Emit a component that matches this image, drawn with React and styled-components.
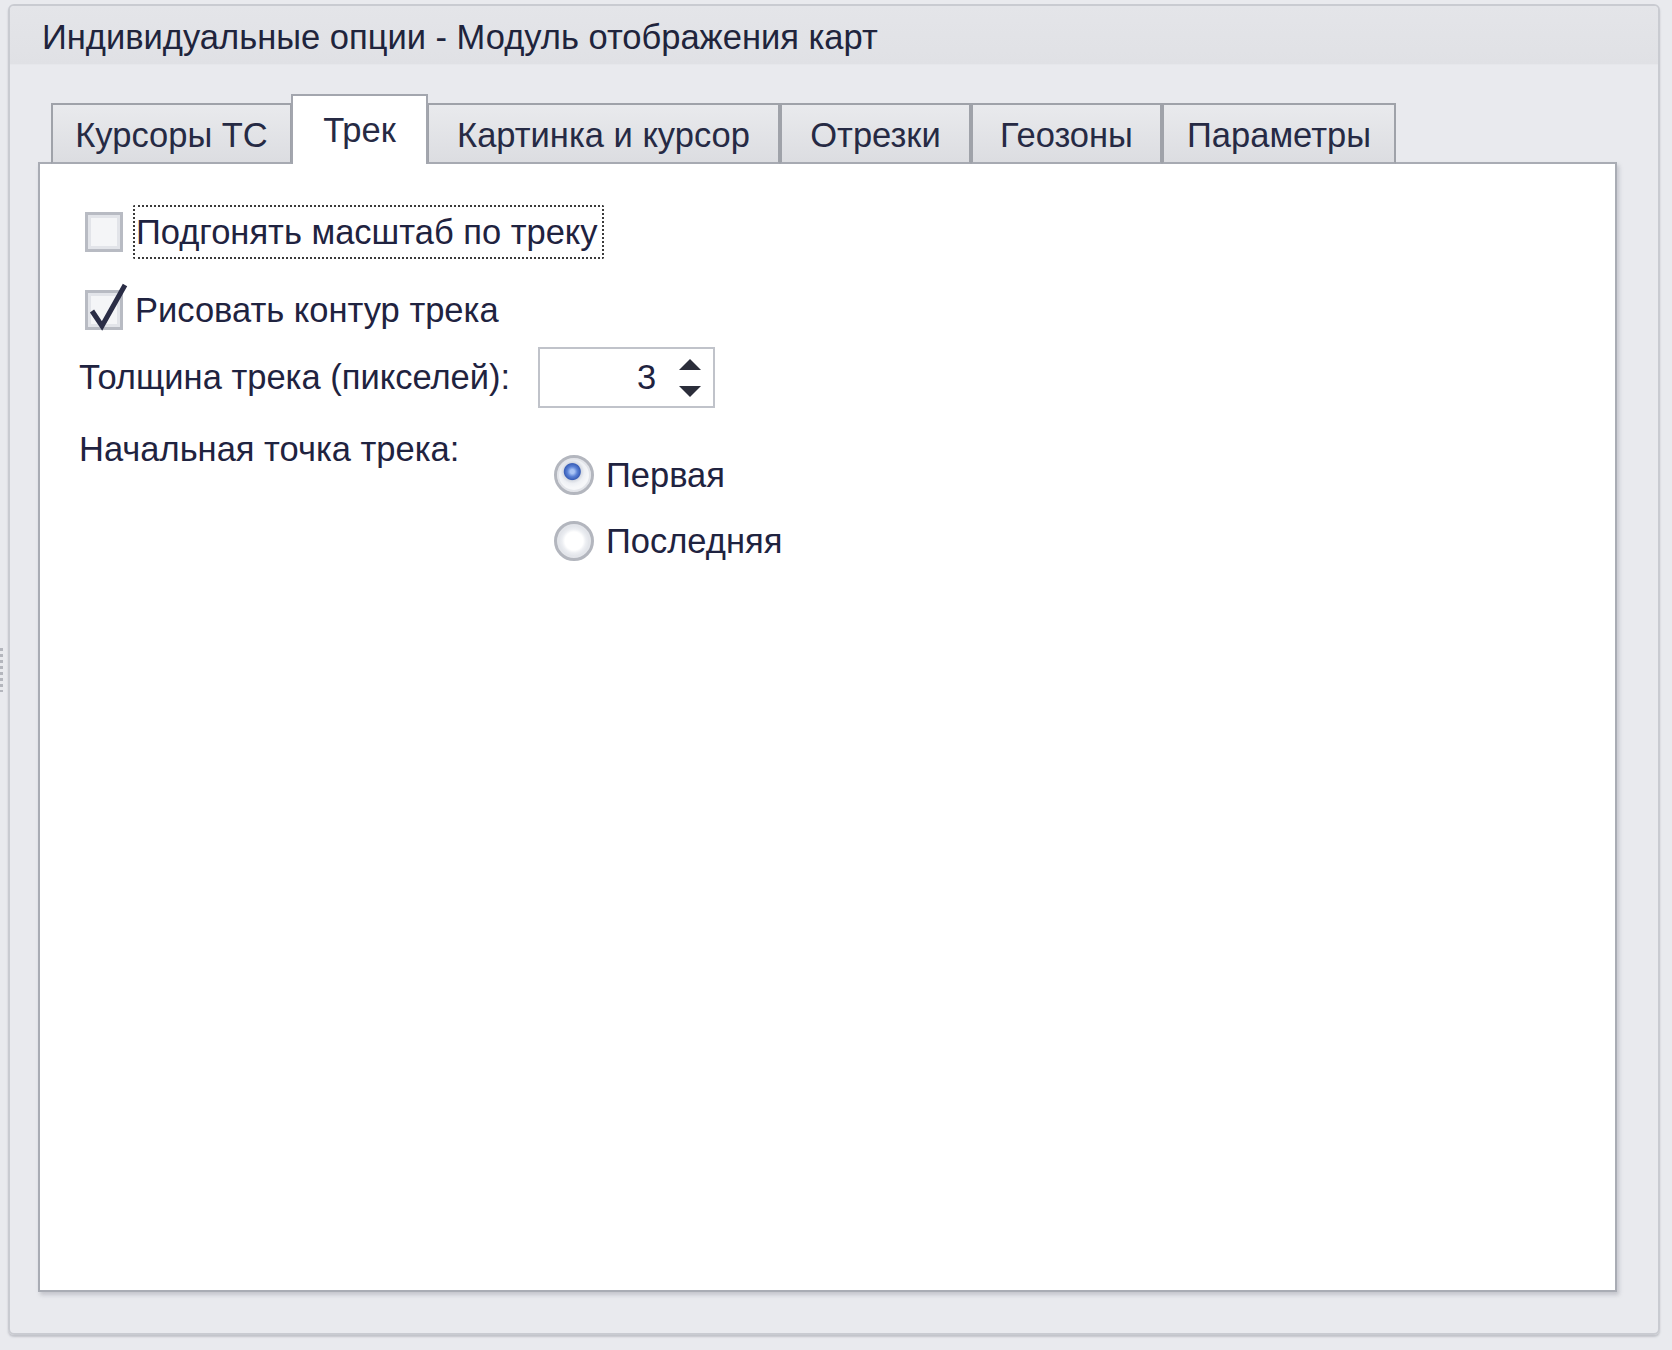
import { useState } from "react";
import styled, { createGlobalStyle } from 'styled-components'

const GlobalStyle = createGlobalStyle`
  html, body {
    margin: 0;
    padding: 0;
    background: #e9eaee;
  }
  body {
    font-family: "Liberation Sans", Arial, sans-serif;
    font-size: 34.5px;
    color: #1f2340;
  }
`

const tabs = [
  { id: 'cursors', label: 'Курсоры ТС', width: 241 },
  { id: 'track', label: 'Трек', width: 135 },
  { id: 'picture', label: 'Картинка и курсор', width: 353 },
  { id: 'segments', label: 'Отрезки', width: 191 },
  { id: 'geozones', label: 'Геозоны', width: 191 },
  { id: 'params', label: 'Параметры', width: 234 },
]

function App() {
  const [activeTab, setActiveTab] = useState('track')
  const [fitScale, setFitScale] = useState(false)
  const [drawOutline, setDrawOutline] = useState(true)
  const [thickness, setThickness] = useState(3)
  const [startPoint, setStartPoint] = useState('first')

  return (
    <Page>
      <GlobalStyle />
      <Gripper />
      <Window>
        <Header>Индивидуальные опции - Модуль отображения карт</Header>
        <Body>
          <TabStrip>
            {tabs.map(t => (
              <Tab
                key={t.id}
                $width={t.width}
                $active={activeTab === t.id}
                onClick={() => setActiveTab(t.id)}
              >
                {t.label}
              </Tab>
            ))}
          </TabStrip>
          <Panel>
            <CheckRow onClick={() => setFitScale(!fitScale)}>
              <CheckBox>{fitScale && <CheckMark />}</CheckBox>
              <FocusLabel>Подгонять масштаб по треку</FocusLabel>
            </CheckRow>
            <CheckRow $gap={24} onClick={() => setDrawOutline(!drawOutline)}>
              <CheckBox>{drawOutline && <CheckMark />}</CheckBox>
              <PlainLabel>Рисовать контур трека</PlainLabel>
            </CheckRow>
            <SpinRow>
              <FieldLabel>Толщина трека (пикселей):</FieldLabel>
              <Spin>
                <SpinValue>{thickness}</SpinValue>
                <SpinArrows>
                  <ArrowButton onClick={() => setThickness(thickness + 1)}>
                    <svg width="22" height="11" viewBox="0 0 22 11"><polygon points="11,0 22,11 0,11" fill="#2b2d3a" /></svg>
                  </ArrowButton>
                  <ArrowButton onClick={() => setThickness(Math.max(1, thickness - 1))}>
                    <svg width="22" height="11" viewBox="0 0 22 11"><polygon points="0,0 22,0 11,11" fill="#2b2d3a" /></svg>
                  </ArrowButton>
                </SpinArrows>
              </Spin>
            </SpinRow>
            <StartRow>
              <FieldLabel>Начальная точка трека:</FieldLabel>
              <RadioGroup>
                <RadioRow onClick={() => setStartPoint('first')}>
                  <Radio $checked={startPoint === 'first'} />
                  <span>Первая</span>
                </RadioRow>
                <RadioRow onClick={() => setStartPoint('last')}>
                  <Radio $checked={startPoint === 'last'} />
                  <span>Последняя</span>
                </RadioRow>
              </RadioGroup>
            </StartRow>
          </Panel>
        </Body>
      </Window>
    </Page>
  )
}

function CheckMark() {
  return (
    <CheckSvg width="42" height="48" viewBox="0 0 42 48">
      <path d="M5 28 L15 43 L38 2" fill="none" stroke="#2a2d46" strokeWidth="5" strokeLinejoin="miter" />
    </CheckSvg>
  )
}

const Page = styled.div`
  display: flex;
  height: 100vh;
  box-sizing: border-box;
  padding: 4px 12px 15px 0;
`

const Gripper = styled.div`
  align-self: flex-start;
  margin-top: 644px;
  width: 3px;
  height: 44px;
  margin-right: 5px;
  background: repeating-linear-gradient(to bottom, #b4b6bd 0 3px, transparent 3px 6px);
`

const Window = styled.div`
  flex: 1;
  display: flex;
  flex-direction: column;
  border: 2px solid #c9cbd1;
  border-radius: 6px;
  box-shadow: 0 2px 2px rgba(120, 122, 135, 0.35);
  overflow: hidden;
`

const Header = styled.div`
  height: 59px;
  display: flex;
  align-items: center;
  padding-left: 32px;
  padding-top: 5px;
  box-sizing: border-box;
  background: linear-gradient(#e4e5e9, #e0e1e5);
  border-bottom: 1px solid #e6e7eb;
  color: #20243c;
  white-space: nowrap;
`

const Body = styled.div`
  flex: 1;
  display: flex;
  flex-direction: column;
  padding: 29px 41px 41px 28px;
`

const TabStrip = styled.div`
  display: flex;
  align-items: flex-end;
  padding-left: 13px;
  margin-bottom: -2px;
  position: relative;
  z-index: 1;
`

const Tab = styled.div`
  width: ${p => p.$width + (p.$active ? 2 : 0)}px;
  height: ${p => (p.$active ? 70 : 61)}px;
  margin: ${p => (p.$active ? '0 -1px' : '0')};
  box-sizing: border-box;
  border: 2px solid ${p => (p.$active ? '#a3a6ae' : '#9fa2a9')};
  border-bottom: ${p => (p.$active ? 'none' : '2px solid #a7aab2')};
  background: ${p => (p.$active ? '#ffffff' : 'linear-gradient(#e9eaed, #dcdde1)')};
  display: flex;
  align-items: center;
  justify-content: center;
  padding-top: ${p => (p.$active ? 0 : 4)}px;
  color: #262a44;
  white-space: nowrap;
  cursor: default;
  position: relative;
  z-index: ${p => (p.$active ? 2 : 1)};
`

const Panel = styled.div`
  flex: 1;
  background: #ffffff;
  border: 2px solid #a9acb4;
  box-shadow: 2px 3px 4px rgba(110, 112, 125, 0.3);
  padding: 41px 0 0 39px;
  display: flex;
  flex-direction: column;
`

const CheckRow = styled.div`
  display: flex;
  align-items: center;
  height: 54px;
  margin-left: 6px;
  margin-top: ${p => p.$gap || 0}px;
  gap: 10px;
  cursor: default;
`

const CheckBox = styled.div`
  width: 38px;
  height: 40px;
  box-sizing: border-box;
  border: 3px solid #b8bbc3;
  background: #f4f5f7;
  box-shadow: inset 0 0 0 3px #e2e4e9;
  position: relative;
  flex-shrink: 0;
`

const CheckSvg = styled.svg`
  position: absolute;
  left: -1px;
  top: -10px;
`

const FocusLabel = styled.span`
  height: 54px;
  box-sizing: border-box;
  display: flex;
  align-items: center;
  padding: 0 4px 0 1px;
  border: 2px dotted #3a3a3a;
  border-radius: 2px;
  white-space: nowrap;
`

const PlainLabel = styled.span`
  padding-left: 2px;
  white-space: nowrap;
`

const SpinRow = styled.div`
  display: flex;
  align-items: center;
  margin-top: 10px;
  gap: 28px;
`

const FieldLabel = styled.div`
  white-space: nowrap;
`

const Spin = styled.div`
  width: 177px;
  height: 61px;
  box-sizing: border-box;
  border: 2px solid #c0c3ca;
  display: flex;
  align-items: center;
`

const SpinValue = styled.div`
  flex: 1;
  text-align: right;
  padding-right: 23px;
`

const SpinArrows = styled.div`
  display: flex;
  flex-direction: column;
  gap: 16px;
  padding-right: 12px;
`

const ArrowButton = styled.div`
  display: flex;
  line-height: 0;
  cursor: default;
`

const StartRow = styled.div`
  display: grid;
  grid-template-columns: 475px auto;
  margin-top: 22px;
`

const RadioGroup = styled.div`
  display: flex;
  flex-direction: column;
  gap: 12px;
  padding-top: 18px;
`

const RadioRow = styled.div`
  display: flex;
  align-items: center;
  height: 54px;
  gap: 12px;
  cursor: default;
`

const Radio = styled.div`
  width: 40px;
  height: 40px;
  box-sizing: border-box;
  border-radius: 50%;
  border: 3px solid #b3b6be;
  flex-shrink: 0;
  background: ${p => p.$checked
    ? 'radial-gradient(circle at 45% 40%, #a9c4f5 0 2px, #5b82d6 5px, #3a5fb8 8px, #d6dae2 9px, #eef0f4 12px, #f6f7f9 16px)'
    : 'radial-gradient(circle, #ffffff 0 9px, #eceef2 12px, #dcdfe5 17px)'};
  box-shadow: inset 0 0 0 2px #e3e5ea;
`

export default App
